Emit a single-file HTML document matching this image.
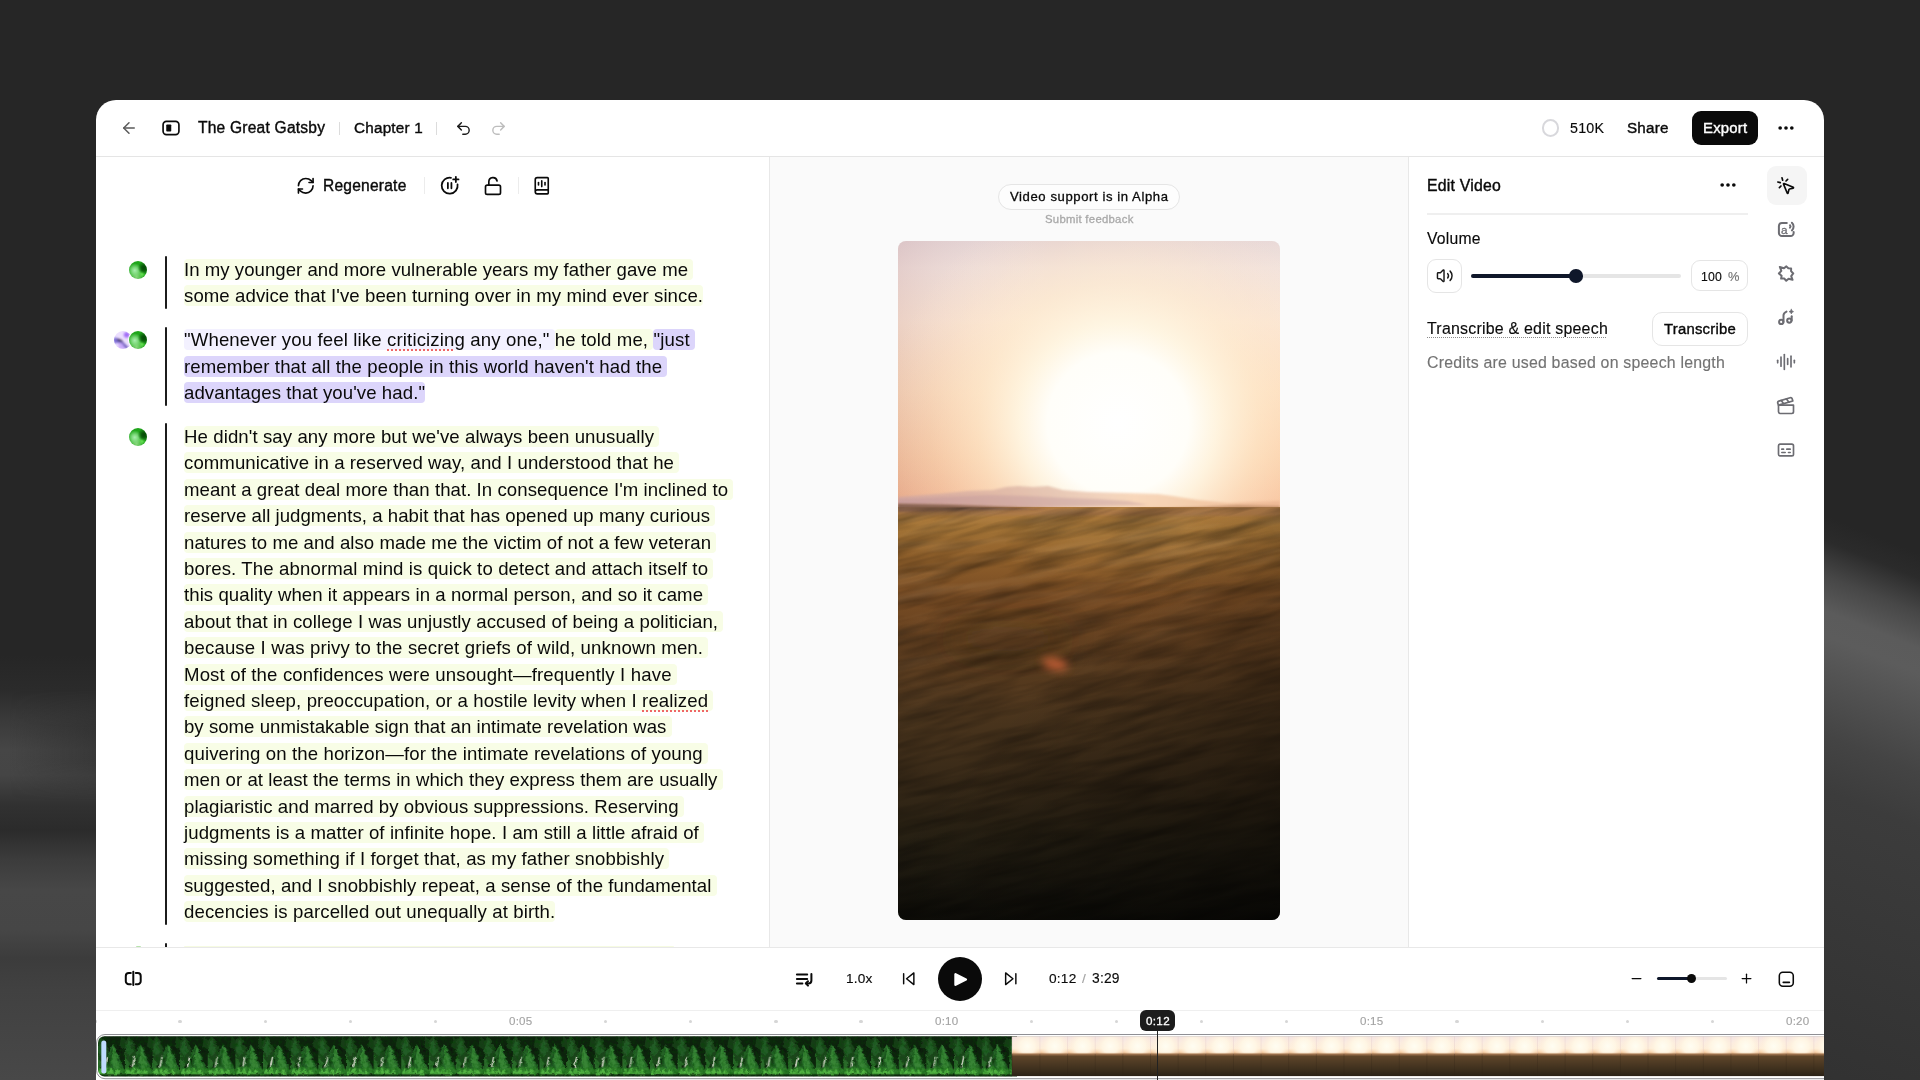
<!DOCTYPE html><html lang="en"><head><meta charset="utf-8"><title>Studio</title><style>

*{box-sizing:border-box;margin:0;padding:0}
html,body{width:1920px;height:1080px;overflow:hidden;background:#262626}
body{font-family:"Liberation Sans",sans-serif;color:#0a0a0a;position:relative;-webkit-font-smoothing:antialiased}
.abs{position:absolute}
.t{position:absolute;white-space:nowrap;line-height:1;will-change:transform}
.m{-webkit-text-stroke:.38px currentColor}
.r{-webkit-text-stroke:.14px currentColor}
svg{position:absolute;overflow:visible}
.ic{fill:none;stroke:#0a0a0a;stroke-width:2;stroke-linecap:round;stroke-linejoin:round}
#bgL{left:0;top:0;width:96px;height:1080px;
 background:linear-gradient(180deg,#262626 0,#262626 655px,#2b2b2b 690px,#3a3a3a 720px,#464646 750px,#454545 775px,#313131 805px,#2b2b2b 830px,#3c3c3c 860px,#474747 890px,#464646 930px,#3c3c3c 958px,#414141 990px,#484848 1080px)}
#bgL i{position:absolute;left:0;top:690px;width:96px;height:110px;background:linear-gradient(90deg,rgba(38,38,38,0) 10%,rgba(38,38,38,.42) 100%);-webkit-mask-image:linear-gradient(180deg,transparent 0,#000 35%,#000 65%,transparent 100%);mask-image:linear-gradient(180deg,transparent 0,#000 35%,#000 65%,transparent 100%)}
.m2{-webkit-text-stroke:.3px currentColor}
#bgR{left:1824px;top:0;width:96px;height:1080px;overflow:hidden;background:#262626}
#bgR i{position:absolute;left:0;top:0;width:96px;height:1200px;transform-origin:0 0;transform:skewY(22deg);
 background:linear-gradient(180deg,#262626 0,#262626 515px,#2b2b2b 540px,#474747 575px,#5b5b5b 610px,#5c5c5c 635px,#525252 675px,#444 735px,#3c3c3c 790px,#383838 900px,#313131 1100px)}
#app{left:96px;top:100px;width:1728px;height:990px;background:#fff;border-radius:20px 20px 0 0;overflow:hidden}
#hdr{left:0;top:0;width:1728px;height:57px;border-bottom:1px solid #e5e5e5;background:#fff}
#left{left:0;top:57px;width:673px;height:790px;background:#fff;overflow:hidden}
#center{left:673px;top:57px;width:640px;height:790px;background:#fafafa;border-left:1px solid #e8e8e8;border-right:1px solid #e8e8e8}
#right{left:1313px;top:57px;width:415px;height:790px;background:#fff}
#bar{left:0;top:847px;width:1728px;height:63px;border-top:1px solid #e8e8e8;background:#fff}
#ruler{left:0;top:910px;width:1728px;height:26px;border-top:1px solid #efefef;background:#fff}
.hl{display:inline-block;border-radius:4px;line-height:20.2px;height:20.8px;padding-top:.6px}
.y{background:#f8fde6}
.p1{background:#f3f1ff}
.p2{background:#dcd5fb}
.ln{will-change:transform;position:absolute;left:88px;white-space:pre;font-size:18.6px;line-height:26.4px;height:26.4px;color:#0a0a0a}
.sp{text-decoration:underline dotted #e66;text-decoration-thickness:1.5px;text-underline-offset:3px}
.bar{position:absolute;left:69px;width:2.5px;background:#1a1a1a;border-radius:1px}
.av{position:absolute;width:18px;height:18px;border-radius:50%}
.avg{background:radial-gradient(circle at 84% 38%,#054a06 0,rgba(5,74,6,.85) 12%,rgba(6,90,8,0) 34%),radial-gradient(circle at 72% 73%,#66e552 0,rgba(98,226,78,0) 19%),radial-gradient(circle at 32% 52%,#aaeeb0 0,rgba(150,232,150,.75) 20%,rgba(110,210,100,0) 46%),radial-gradient(circle at 42% 88%,#86d67a 0,rgba(127,210,116,0) 42%),#1fa51b}
.avp{background:#eadcff}

</style></head><body>
<div id="bgL" class="abs"><i></i></div><div id="bgR" class="abs"><i></i></div>
<div id="app" class="abs"></div>
<div class="abs" style="left:96.00px;top:156.00px;width:1728.00px;height:1.00px;background:#e5e5e5"></div>
<div class="abs" style="left:770.00px;top:157.00px;width:638.00px;height:790.00px;background:#fafafa"></div>
<div class="abs" style="left:769.00px;top:157.00px;width:1.00px;height:790.00px;background:#e8e8e8"></div>
<div class="abs" style="left:1408.00px;top:157.00px;width:1.00px;height:790.00px;background:#e8e8e8"></div>
<div class="abs" style="left:96.00px;top:947.00px;width:1728.00px;height:1.00px;background:#e8e8e8"></div>
<div class="abs" style="left:96.00px;top:1010.00px;width:1728.00px;height:1.00px;background:#efefef"></div>
<svg class="ic" style="left:119.50px;top:119.00px;color:#5a5a5a;stroke:#5a5a5a" width="18.00" height="18.00" viewBox="0 0 24 24" stroke-width="2" ><path d="m12 19-7-7 7-7"/><path d="M19 12H5"/></svg>
<svg class="ic" style="left:160.80px;top:117.70px;color:#0a0a0a;stroke:#0a0a0a" width="20.00" height="20.00" viewBox="0 0 24 24" stroke-width="2" ><rect x="2.500" y="4" width="19" height="16" rx="4"/><rect x="6.300" y="7.700" width="6" height="8.600" rx="1" fill="currentColor" stroke="none"/></svg>
<div class="t m" style="left:198.10px;top:118.22px;font-size:15.57px;line-height:20.24px;font-weight:500;color:#0a0a0a;letter-spacing:0.220px;">The Great Gatsby</div>
<div class="abs" style="left:339.00px;top:121.50px;width:1.00px;height:13.00px;background:#dcdcdc"></div>
<div class="t m" style="left:354.00px;top:118.22px;font-size:15.27px;line-height:19.85px;font-weight:500;color:#0a0a0a;letter-spacing:0.220px;">Chapter 1</div>
<div class="abs" style="left:436.00px;top:121.50px;width:1.00px;height:13.00px;background:#dcdcdc"></div>
<svg class="ic" style="left:454.90px;top:119.90px;color:#1a1a1a;stroke:#1a1a1a" width="17.00" height="17.00" viewBox="0 0 24 24" stroke-width="2" ><path d="M9 14 4 9l5-5"/><path d="M4 9h10.5a5.500 5.500 0 0 1 5.500 5.500a5.500 5.500 0 0 1-5.500 5.500H11"/></svg>
<svg class="ic" style="left:489.90px;top:119.90px;color:#bdbdbd;stroke:#bdbdbd" width="17.00" height="17.00" viewBox="0 0 24 24" stroke-width="2" ><path d="m15 14 5-5-5-5"/><path d="M20 9H9.500A5.500 5.500 0 0 0 4 14.500A5.500 5.500 0 0 0 9.500 20H13"/></svg>
<div class="abs" style="left:1542.20px;top:119.40px;width:17.20px;height:17.20px;border:2px solid #d8d8dc;border-radius:50%"></div>
<div class="t r" style="left:1569.80px;top:119.21px;font-size:14.28px;line-height:18.56px;font-weight:400;color:#0a0a0a;letter-spacing:0.220px;">510K</div>
<div class="t m" style="left:1627.20px;top:118.20px;font-size:15.22px;line-height:19.79px;font-weight:500;color:#0a0a0a;letter-spacing:0.220px;">Share</div>
<div class="abs" style="left:1692.00px;top:110.50px;width:66.00px;height:34.50px;background:#0a0a0a;border-radius:9px"></div>
<div class="t m" style="left:1702.70px;top:118.21px;font-size:14.92px;line-height:19.4px;font-weight:500;color:#fff;letter-spacing:0.220px;">Export</div>
<svg class="ic" style="left:1776.40px;top:117.80px;color:#0a0a0a;stroke:#0a0a0a" width="20.00" height="20.00" viewBox="0 0 24 24" stroke-width="2" ><circle cx="5" cy="12" r="1.200" fill="currentColor"/><circle cx="12" cy="12" r="1.200" fill="currentColor"/><circle cx="19" cy="12" r="1.200" fill="currentColor"/></svg>
<svg class="ic" style="left:295.75px;top:176.05px;color:#0a0a0a;stroke:#0a0a0a" width="19.50" height="19.50" viewBox="0 0 24 24" stroke-width="2" ><path d="M3 12a9 9 0 0 1 9-9 9.750 9.750 0 0 1 6.740 2.740L21 8"/><path d="M21 3v5h-5"/><path d="M21 12a9 9 0 0 1-9 9 9.750 9.750 0 0 1-6.740-2.740L3 16"/><path d="M8 16H3v5"/></svg>
<div class="t m" style="left:322.50px;top:176.41px;font-size:15.57px;line-height:20.24px;font-weight:500;color:#0a0a0a;letter-spacing:0.220px;">Regenerate</div>
<div class="abs" style="left:424.00px;top:177.00px;width:1.00px;height:17.00px;background:#ececec"></div>
<svg class="ic" style="left:438.65px;top:174.95px;color:#0a0a0a;stroke:#0a0a0a" width="21.30" height="21.30" viewBox="0 0 24 24" stroke-width="1.9" ><path d="M13.500 3.100A9 9 0 1 0 20.900 10.500"/><path d="M10 9v6"/><path d="M14 9v6"/><path d="M19 2v6"/><path d="M16 5h6"/></svg>
<svg class="ic" style="left:483.30px;top:175.70px;color:#0a0a0a;stroke:#0a0a0a" width="20.00" height="20.00" viewBox="0 0 24 24" stroke-width="2" ><rect width="18" height="11" x="3" y="11" rx="2" ry="2"/><path d="M7 11V7a5 5 0 0 1 9.900-1"/></svg>
<div class="abs" style="left:517.50px;top:177.00px;width:1.00px;height:17.00px;background:#ececec"></div>
<svg class="ic" style="left:532.15px;top:175.75px;color:#0a0a0a;stroke:#0a0a0a" width="19.50" height="19.50" viewBox="0 0 24 24" stroke-width="2" ><path d="M12 6v7"/><path d="M16 8v3"/><path d="M4 19.500v-15A2.500 2.500 0 0 1 6.500 2H19a1 1 0 0 1 1 1v18a1 1 0 0 1-1 1H6.500a1 1 0 0 1 0-5H20"/><path d="M8 8v3"/></svg>
<div class="ln" style="left:184.4px;top:256.80px;letter-spacing:0.031px"><span class="hl y">In my younger and more vulnerable years my father gave me </span></div>
<div class="ln" style="left:184.4px;top:283.20px;letter-spacing:0.080px"><span class="hl y">some advice that I've been turning over in my mind ever since.</span></div>
<div class="ln" style="left:184.4px;top:327.20px;letter-spacing:0.133px"><span class="hl p1">&quot;Whenever you feel like <span class="sp">criticizing</span> any one,&quot; </span><span class="hl y">he told me, </span><span class="hl p2">&quot;just </span></div>
<div class="ln" style="left:184.4px;top:353.60px;letter-spacing:0.109px"><span class="hl p2">remember that all the people in this world haven't had the </span></div>
<div class="ln" style="left:184.4px;top:380.00px;letter-spacing:0.088px"><span class="hl p2">advantages that you've had."</span></div>
<div class="ln" style="left:184.4px;top:424.00px;letter-spacing:0.095px"><span class="hl y">He didn't say any more but we've always been unusually </span></div>
<div class="ln" style="left:184.4px;top:450.40px;letter-spacing:0.081px"><span class="hl y">communicative in a reserved way, and I understood that he </span></div>
<div class="ln" style="left:184.4px;top:476.80px;letter-spacing:0.062px"><span class="hl y">meant a great deal more than that. In consequence I'm inclined to </span></div>
<div class="ln" style="left:184.4px;top:503.20px;letter-spacing:0.049px"><span class="hl y">reserve all judgments, a habit that has opened up many curious </span></div>
<div class="ln" style="left:184.4px;top:529.60px;letter-spacing:0.049px"><span class="hl y">natures to me and also made me the victim of not a few veteran </span></div>
<div class="ln" style="left:184.4px;top:556.00px;letter-spacing:0.120px"><span class="hl y">bores. The abnormal mind is quick to detect and attach itself to </span></div>
<div class="ln" style="left:184.4px;top:582.40px;letter-spacing:0.069px"><span class="hl y">this quality when it appears in a normal person, and so it came </span></div>
<div class="ln" style="left:184.4px;top:608.80px;letter-spacing:0.104px"><span class="hl y">about that in college I was unjustly accused of being a politician, </span></div>
<div class="ln" style="left:184.4px;top:635.20px;letter-spacing:0.139px"><span class="hl y">because I was privy to the secret griefs of wild, unknown men. </span></div>
<div class="ln" style="left:184.4px;top:661.60px;letter-spacing:0.146px"><span class="hl y">Most of the confidences were unsought—frequently I have </span></div>
<div class="ln" style="left:184.4px;top:688.00px;letter-spacing:0.112px"><span class="hl y">feigned sleep, preoccupation, or a hostile levity when I <span class="sp">realized</span> </span></div>
<div class="ln" style="left:184.4px;top:714.40px;letter-spacing:0.032px"><span class="hl y">by some unmistakable sign that an intimate revelation was </span></div>
<div class="ln" style="left:184.4px;top:740.80px;letter-spacing:0.114px"><span class="hl y">quivering on the horizon—for the intimate revelations of young </span></div>
<div class="ln" style="left:184.4px;top:767.20px;letter-spacing:0.051px"><span class="hl y">men or at least the terms in which they express them are usually </span></div>
<div class="ln" style="left:184.4px;top:793.60px;letter-spacing:0.063px"><span class="hl y">plagiaristic and marred by obvious suppressions. Reserving </span></div>
<div class="ln" style="left:184.4px;top:820.00px;letter-spacing:0.092px"><span class="hl y">judgments is a matter of infinite hope. I am still a little afraid of </span></div>
<div class="ln" style="left:184.4px;top:846.40px;letter-spacing:0.115px"><span class="hl y">missing something if I forget that, as my father snobbishly </span></div>
<div class="ln" style="left:184.4px;top:872.80px;letter-spacing:0.071px"><span class="hl y">suggested, and I snobbishly repeat, a sense of the fundamental </span></div>
<div class="ln" style="left:184.4px;top:899.20px;letter-spacing:0.118px"><span class="hl y">decencies is parcelled out unequally at birth.</span></div>
<div class="abs" style="left:165.40px;top:256.20px;width:2.10px;height:52.80px;background:#1c1c1c;border-radius:1px"></div>
<div class="abs" style="left:165.40px;top:326.60px;width:2.10px;height:79.20px;background:#1c1c1c;border-radius:1px"></div>
<div class="abs" style="left:165.40px;top:423.40px;width:2.10px;height:501.60px;background:#1c1c1c;border-radius:1px"></div>
<div class="abs" style="left:165.40px;top:942.90px;width:2.10px;height:4.20px;background:#1c1c1c;border-radius:1px 1px 0 0"></div>
<div class="abs" style="left:184.40px;top:946.00px;width:490.00px;height:1.00px;background:#f6fbe2;border-radius:4px 4px 0 0"></div>
<div class="av avg" style="left:129.10px;top:260.70px;"></div>
<svg style="left:113.6px;top:331.10px" width="18" height="18" viewBox="0 0 18 18"><defs><clipPath id="pc"><circle cx="9" cy="9" r="9"/></clipPath><filter id="pb" x="-50%" y="-50%" width="200%" height="200%"><feGaussianBlur stdDeviation=".9"/></filter></defs><g clip-path="url(#pc)"><rect width="18" height="18" fill="#ecdfff"/><g filter="url(#pb)"><circle cx="12.700" cy="3.800" r="2.900" fill="#a26df6"/><path d="M-1 6.500 L3 7 L8 10 L15 17 L12 18 L6 12 L1 12 L-1 13Z" fill="#7f6fd8"/><path d="M3 7.500 L7.500 9 L9.500 11.500 L6 10.500 L3.500 10Z" fill="#33243f"/><path d="M8 10.500 L14.500 16.500 L13 17.500 L7.500 11.500Z" fill="#6a55b0"/><path d="M4 12 L8 12.500 L11 18 L5 18Z" fill="#cbaafa"/></g></g></svg>
<div class="av avg" style="left:129.10px;top:331.10px;box-shadow:0 0 0 1px #fff"></div>
<div class="av avg" style="left:129.10px;top:427.90px;"></div>
<div class="abs" style="left:135.50px;top:946.20px;width:5.00px;height:0.80px;background:#b7e3ac;border-radius:5px 5px 0 0"></div>
<div class="abs" style="left:998.00px;top:183.50px;width:182.30px;height:26.00px;background:#fdfdfd;border:1px solid #e5e5e5;border-radius:13px"></div>
<div class="t m2" style="left:1010.00px;top:188.41px;font-size:13.1px;line-height:17.03px;font-weight:500;color:#0a0a0a;letter-spacing:0.586px;">Video support is in Alpha</div>
<div class="t m2" style="left:1044.70px;top:211.71px;font-size:11.34px;line-height:14.74px;font-weight:500;color:#a8a8a8;letter-spacing:0.281px;">Submit feedback</div>
<svg style="left:898px;top:241px" width="382" height="679" viewBox="0 0 382 679">
<defs>
<clipPath id="fc"><rect x="0" y="266.500" width="382" height="413"/></clipPath>
<clipPath id="vc"><rect x="0" y="0" width="382" height="679" rx="8"/></clipPath>
<linearGradient id="sky" x1="0" y1="0" x2="0" y2="1">
<stop offset="0" stop-color="#e4d3d3"/><stop offset=".1" stop-color="#efdfd9"/><stop offset=".3" stop-color="#fae4d0"/><stop offset=".55" stop-color="#fcd7b0"/><stop offset=".8" stop-color="#f9c08e"/><stop offset="1" stop-color="#f3a97a"/>
</linearGradient>
<linearGradient id="skyx" x1="0" y1="0" x2="1" y2="0">
<stop offset="0" stop-color="#c9a4ab" stop-opacity=".3"/><stop offset=".4" stop-color="#fff" stop-opacity="0"/><stop offset="1" stop-color="#fff4ea" stop-opacity=".2"/>
</linearGradient>
<radialGradient id="sun" cx="220" cy="182" r="235" gradientUnits="userSpaceOnUse">
<stop offset="0" stop-color="#fff"/><stop offset=".3" stop-color="#fffef9"/><stop offset=".42" stop-color="#fff7e4" stop-opacity=".92"/><stop offset=".6" stop-color="#ffedd2" stop-opacity=".6"/><stop offset=".8" stop-color="#fee5cb" stop-opacity=".25"/><stop offset="1" stop-color="#fbe0d0" stop-opacity="0"/>
</radialGradient>
<linearGradient id="field" x1="0" y1="0" x2="0" y2="1">
<stop offset="0" stop-color="#b47f40"/><stop offset=".05" stop-color="#a27336"/><stop offset=".12" stop-color="#90602b"/><stop offset=".22" stop-color="#774b23"/><stop offset=".35" stop-color="#603f20"/><stop offset=".5" stop-color="#4b351d"/><stop offset=".65" stop-color="#392a18"/><stop offset=".8" stop-color="#272013"/><stop offset=".92" stop-color="#19160e"/><stop offset="1" stop-color="#0f0e09"/>
</linearGradient>
<linearGradient id="g2m" x1="0" y1="0" x2="0" y2="1"><stop offset="0" stop-color="#fff"/><stop offset=".5" stop-color="#fff"/><stop offset="1" stop-color="#000"/></linearGradient>
<mask id="g2mask" maskUnits="userSpaceOnUse" x="-100" y="150" width="600" height="320"><rect x="-100" y="150" width="600" height="320" fill="url(#g2m)"/></mask>
<linearGradient id="fieldx" x1="0" y1="0" x2="1" y2="1">
<stop offset=".4" stop-color="#000" stop-opacity="0"/><stop offset="1" stop-color="#000" stop-opacity=".5"/>
</linearGradient>
<linearGradient id="mtn" x1="0" y1="0" x2="1" y2="0">
<stop offset="0" stop-color="#c3a1a8"/><stop offset=".4" stop-color="#d8aa99"/><stop offset=".62" stop-color="#f4c096"/><stop offset="1" stop-color="#e6b08e"/>
</linearGradient>
<filter id="bl" x="-100%" y="-100%" width="300%" height="300%"><feGaussianBlur stdDeviation="4.500"/></filter>
<filter id="bl2" x="-100%" y="-200%" width="300%" height="500%"><feGaussianBlur stdDeviation="16"/></filter>
<filter id="bl1" x="-10%" y="-50%" width="120%" height="200%"><feGaussianBlur stdDeviation="1.300"/></filter>
<filter id="grain" x="0" y="0" width="100%" height="100%">
<feTurbulence type="fractalNoise" baseFrequency="0.012 0.09" numOctaves="3" seed="7" result="n"/>
<feColorMatrix type="matrix" values="0 0 0 0 0  0 0 0 0 0  0 0 0 0 0  1.600 0 0 0 -0.55"/>
</filter>
<filter id="grain2" x="0" y="0" width="100%" height="100%">
<feTurbulence type="fractalNoise" baseFrequency="0.012 0.09" numOctaves="3" seed="23" result="n"/>
<feColorMatrix type="matrix" values="0 0 0 0 1  0 0 0 0 .82  0 0 0 0 .55  1.500 0 0 0 -0.62"/>
</filter>
</defs>
<g clip-path="url(#vc)">
<rect width="382" height="270" fill="url(#sky)"/>
<rect width="382" height="270" fill="url(#skyx)"/>
<rect width="382" height="300" fill="url(#sun)"/>
<path filter="url(#bl1)" d="M0 256 L40 253 L70 250 L95 249 L108 246 L120 245 L135 246 L150 245 L165 249 L190 251 L230 252 L260 253 L275 255 L300 259 L330 262 L350 261 L382 260 V272 H0Z" fill="url(#mtn)" opacity=".6"/>
<path filter="url(#bl1)" d="M0 259 L50 256 L90 254 L130 255 L170 257 L200 258 L230 260 L250 264 L0 268Z" fill="#b9929c" opacity=".35"/>
<rect y="266" width="382" height="413" fill="url(#field)"/>
<path filter="url(#bl1)" d="M0 263 L60 264 L120 266 L180 268 L240 268 L300 266 L340 264 L382 265 V275 L0 274Z" fill="#a87650" opacity=".55"/>
<path filter="url(#bl1)" d="M0 263 L50 264 L110 266.500 L150 268 L0 271Z" fill="#7a584a" opacity=".8"/>
<ellipse cx="110" cy="398" rx="60" ry="14" fill="#2e2010" opacity=".4" filter="url(#bl2)"/>
<ellipse cx="250" cy="310" rx="120" ry="10" fill="#d0a058" opacity=".35" filter="url(#bl2)"/>
<g clip-path="url(#fc)"><g transform="rotate(-14 191 470)" opacity=".42"><rect x="-80" y="180" width="560" height="600" filter="url(#grain)"/></g>
<g transform="rotate(-10 191 470)" opacity=".13" mask="url(#g2mask)"><rect x="-80" y="180" width="560" height="290" filter="url(#grain2)"/></g></g>
<rect y="266" width="382" height="413" fill="url(#fieldx)"/>
<rect y="258" width="382" height="14" fill="url(#field)" opacity="0"/>
<ellipse cx="157" cy="423" rx="13" ry="6" fill="#d8683a" opacity=".82" filter="url(#bl)" transform="rotate(12 157 423)"/>
</g>
</svg>

<div class="t m" style="left:1427.40px;top:176.41px;font-size:15.82px;line-height:20.57px;font-weight:500;color:#0a0a0a;letter-spacing:0.220px;">Edit Video</div>
<svg class="ic" style="left:1718.30px;top:175.40px;color:#0a0a0a;stroke:#0a0a0a" width="20.00" height="20.00" viewBox="0 0 24 24" stroke-width="2" ><circle cx="5" cy="12" r="1.200" fill="currentColor"/><circle cx="12" cy="12" r="1.200" fill="currentColor"/><circle cx="19" cy="12" r="1.200" fill="currentColor"/></svg>
<div class="abs" style="left:1427.00px;top:213.30px;width:321.00px;height:1.50px;background:#efefef"></div>
<div class="t r" style="left:1427.40px;top:229.01px;font-size:15.72px;line-height:20.44px;font-weight:400;color:#0a0a0a;letter-spacing:0.220px;">Volume</div>
<div class="abs" style="left:1427.00px;top:259.00px;width:35.00px;height:34.00px;border:1px solid #e5e5e5;border-radius:9px;background:#fff"></div>
<svg class="ic" style="left:1435.85px;top:267.05px;color:#1a1a1a;stroke:#1a1a1a" width="17.50" height="17.50" viewBox="0 0 24 24" stroke-width="2" ><path d="M11 4.702a.705.705 0 0 0-1.203-.498L6.413 7.587A1.400 1.400 0 0 1 5.416 8H3a1 1 0 0 0-1 1v6a1 1 0 0 0 1 1h2.416a1.400 1.400 0 0 1 .997.413l3.383 3.384A.705.705 0 0 0 11 19.298z"/><path d="M16 9a5 5 0 0 1 0 6"/><path d="M19.364 18.364a9 9 0 0 0 0-12.728"/></svg>
<div class="abs" style="left:1471.30px;top:274.00px;width:210.00px;height:4.00px;background:#e5e5e5;border-radius:2px"></div>
<div class="abs" style="left:1471.30px;top:274.00px;width:105.00px;height:4.00px;background:#0f172a;border-radius:2px"></div>
<div class="abs" style="left:1569.30px;top:269.20px;width:13.60px;height:13.60px;background:#0f172a;border-radius:50%"></div>
<div class="abs" style="left:1691.00px;top:260.00px;width:57.00px;height:31.00px;border:1px solid #e5e5e5;border-radius:9px;background:#fff"></div>
<div class="t r" style="left:1700.50px;top:269.71px;font-size:12.27px;line-height:15.95px;font-weight:400;color:#0a0a0a;letter-spacing:0.220px;">100</div>
<div class="t r" style="left:1727.50px;top:268.70px;font-size:12.9px;line-height:16.77px;font-weight:400;color:#737373;letter-spacing:0.000px;">%</div>
<div class="t r" style="left:1427.00px;top:319.21px;font-size:15.94px;line-height:20.72px;font-weight:400;color:#0a0a0a;letter-spacing:0.220px;text-decoration:underline dotted #8a8a8a;text-decoration-thickness:1.3px;text-underline-offset:2.6px;">Transcribe &amp; edit speech</div>
<div class="abs" style="left:1651.50px;top:311.50px;width:96.00px;height:34.50px;border:1px solid #e5e5e5;border-radius:10px;background:#fff"></div>
<div class="t m" style="left:1663.80px;top:320.22px;font-size:14.88px;line-height:19.34px;font-weight:500;color:#0a0a0a;letter-spacing:0.220px;">Transcribe</div>
<div class="t r" style="left:1427.00px;top:352.51px;font-size:15.89px;line-height:20.66px;font-weight:400;color:#737373;letter-spacing:0.220px;">Credits are used based on speech length</div>
<div class="abs" style="left:1766.50px;top:166.20px;width:40.00px;height:39.30px;background:#f5f5f5;border-radius:9px"></div>
<svg class="ic" style="left:1776.30px;top:175.90px;color:#0a0a0a;stroke:#0a0a0a" width="20.00" height="20.00" viewBox="0 0 24 24" stroke-width="2" ><path d="M14 4.100 12 6"/><path d="m5.100 8-2.900-.800"/><path d="m6 12-1.900 2"/><path d="M7.200 2.200 8 5.100"/><path d="M9.037 9.690a.498.498 0 0 1 .653-.653l11 4.500a.500.500 0 0 1-.074.949l-4.349 1.041a1 1 0 0 0-.740.739l-1.040 4.350a.500.500 0 0 1-.950.074z"/></svg>
<svg class="ic" style="left:1772px;top:216px;color:#6c6c72;stroke:#6c6c72" width="30" height="28" viewBox="1772 216 30 28" stroke-width="1.55"><path d="M1786.800 223.100H1781.900a3 3 0 0 0-3 3v6.900a3 3 0 0 0 3 3h8.750a3 3 0 0 0 3-3v-.900"/><path d="M1791.900 222.700a5.200 5.200 0 0 1 0 7.700"/><path d="M1790 225.200a1.900 1.900 0 0 1 0 2.500"/></svg>
<div class="t m2" style="left:1780.70px;top:223.12px;font-size:11.8px;line-height:15.34px;font-weight:500;color:#6c6c72;letter-spacing:0.000px;">a</div>
<svg class="ic" style="left:1772px;top:260px;color:#6c6c72;stroke:#6c6c72" width="30" height="28" viewBox="1772 260 30 28" stroke-width="1.5"><path d="M1786.36 266.36 L1788.33 268.30 L1791.14 268.59 L1791.06 271.15 L1793.25 273.48 L1791.19 276.07 L1792.54 279.78 L1788.59 278.67 L1786.24 280.72 L1784.19 278.54 L1781.11 278.62 L1781.59 275.82 L1778.89 273.48 L1781.33 270.89 L1779.83 266.95 L1783.93 268.30Z"/></svg>
<svg class="ic" style="left:1772px;top:304px;color:#6c6c72;stroke:#6c6c72" width="30" height="28" viewBox="1772 304 30 28" stroke-width="1.5"><circle cx="1781.200" cy="321.900" r="2.150"/><path d="M1783.500 321.900V315.300q0-2.300 3-3.700"/><circle cx="1789.300" cy="320.600" r="2.150"/><path d="M1791.700 320.600V316.300"/><path d="M1791.300 309.300q.300 2 2.300 2.350q-2 .350-2.300 2.350q-.300-2-2.300-2.350q2-.350 2.300-2.350z" fill="currentColor" stroke-width=".6"/></svg>
<svg class="ic" style="left:1776.30px;top:351.50px;color:#6c6c72;stroke:#6c6c72" width="20.00" height="20.00" viewBox="0 0 24 24" stroke-width="1.85" ><path d="M2 10v3"/><path d="M6 6v11"/><path d="M10 3v18"/><path d="M14 8v7"/><path d="M18 5v13"/><path d="M22 10v3"/></svg>
<svg class="ic" style="left:1776.30px;top:395.80px;color:#6c6c72;stroke:#6c6c72" width="20.00" height="20.00" viewBox="0 0 24 24" stroke-width="1.85" ><path d="M20.200 6 3 11l-.900-2.400c-.300-1.100.300-2.200 1.300-2.500l13.500-4c1.100-.300 2.200.300 2.500 1.300Z"/><path d="m6.200 5.300 3.100 3.900"/><path d="m12.400 3.400 3.100 4"/><path d="M3 11h18v8a2 2 0 0 1-2 2H5a2 2 0 0 1-2-2Z"/></svg>
<svg class="ic" style="left:1776.30px;top:439.50px;color:#6c6c72;stroke:#6c6c72" width="20.00" height="20.00" viewBox="0 0 24 24" stroke-width="1.85" ><rect width="18" height="14" x="3" y="5" rx="2" ry="2"/><path d="M7 15h4M15 15h2M7 11h2M13 11h4"/></svg>
<svg class="ic" style="left:120px;top:966px;color:#0a0a0a;stroke:#0a0a0a" width="28" height="26" viewBox="120 966 28 26" stroke-width="1.8"><path d="M130.800 972.950H128.800a3 3 0 0 0-3 3v5.250a3 3 0 0 0 3 3H130.800"/><path d="M135.800 972.950H137.700a3 3 0 0 1 3 3v5.250a3 3 0 0 1-3 3H135.800"/><path d="M133.300 971.800V985.100"/></svg>
<svg class="ic" style="left:790px;top:966px;color:#0a0a0a;stroke:#0a0a0a" width="30" height="26" viewBox="790 966 30 26" stroke-width="1.7"><path d="M796.900 974.400H807.200M796.900 978.900H807.200M796.900 983.400H802.400"/><path d="M811.400 974V980.400a3 3 0 0 1-3 3H806.200"/><path d="M808 981.200L805.800 983.400L808 985.600"/></svg>
<div class="t r" style="left:845.80px;top:970.41px;font-size:13.63px;line-height:17.72px;font-weight:400;color:#0a0a0a;letter-spacing:0.220px;">1.0x</div>
<svg class="ic" style="left:900.45px;top:969.85px;color:#0a0a0a;stroke:#0a0a0a" width="17.50" height="17.50" viewBox="0 0 24 24" stroke-width="2.2" ><polygon points="19 20 9 12 19 4 19 20"/><line x1="5" x2="5" y1="19" y2="5"/></svg>
<div class="abs" style="left:938.20px;top:957.00px;width:44.00px;height:44.00px;background:#0a0a0a;border-radius:50%"></div>
<svg style="left:953.3px;top:970.5px" width="16" height="17" viewBox="0 0 16 17"><path d="M2.500 3.300v10.400l10.400-5.200z" fill="#fff" stroke="#fff" stroke-width="2.400" stroke-linejoin="round"/></svg>
<svg class="ic" style="left:1001.85px;top:969.85px;color:#0a0a0a;stroke:#0a0a0a" width="17.50" height="17.50" viewBox="0 0 24 24" stroke-width="2.2" ><polygon points="5 4 15 12 5 20 5 4"/><line x1="19" x2="19" y1="5" y2="19"/></svg>
<div class="t r" style="left:1048.80px;top:970.40px;font-size:13.7px;line-height:17.81px;font-weight:400;color:#0a0a0a;letter-spacing:0.220px;">0:12</div>
<div class="t r" style="left:1082.30px;top:970.40px;font-size:13.7px;line-height:17.81px;font-weight:400;color:#a3a3a3;letter-spacing:0.000px;">/</div>
<div class="t r" style="left:1091.90px;top:970.41px;font-size:13.8px;line-height:17.94px;font-weight:400;color:#0a0a0a;letter-spacing:0.220px;">3:29</div>
<svg class="ic" style="left:1629.30px;top:971.20px;color:#0a0a0a;stroke:#0a0a0a" width="15.00" height="15.00" viewBox="0 0 24 24" stroke-width="2" ><path d="M5 12h14"/></svg>
<div class="abs" style="left:1657.00px;top:977.10px;width:70.00px;height:3.00px;background:#e5e5e5;border-radius:2px"></div>
<div class="abs" style="left:1657.00px;top:977.10px;width:34.00px;height:3.00px;background:#0f172a;border-radius:2px"></div>
<div class="abs" style="left:1686.90px;top:974.10px;width:9.00px;height:9.00px;background:#0a0a0a;border-radius:50%"></div>
<svg class="ic" style="left:1739.20px;top:971.20px;color:#0a0a0a;stroke:#0a0a0a" width="15.00" height="15.00" viewBox="0 0 24 24" stroke-width="2" ><path d="M5 12h14"/><path d="M12 5v14"/></svg>
<svg class="ic" style="left:1776.70px;top:969.60px;color:#0a0a0a;stroke:#0a0a0a" width="18.60" height="18.60" viewBox="0 0 24 24" stroke-width="2" ><rect x="3" y="3" width="18" height="18" rx="4.500"/><path d="M8 16h8"/></svg>
<div class="abs" style="left:178.43px;top:1020.00px;width:3.20px;height:3.20px;background:#d6d6d6;border-radius:50%"></div>
<div class="abs" style="left:263.56px;top:1020.00px;width:3.20px;height:3.20px;background:#d6d6d6;border-radius:50%"></div>
<div class="abs" style="left:348.69px;top:1020.00px;width:3.20px;height:3.20px;background:#d6d6d6;border-radius:50%"></div>
<div class="abs" style="left:433.82px;top:1020.00px;width:3.20px;height:3.20px;background:#d6d6d6;border-radius:50%"></div>
<div class="t r" style="left:508.95px;top:1014.21px;font-size:11.58px;line-height:15.05px;font-weight:400;color:#a3a3a3;letter-spacing:0.220px;">0:05</div>
<div class="abs" style="left:604.08px;top:1020.00px;width:3.20px;height:3.20px;background:#d6d6d6;border-radius:50%"></div>
<div class="abs" style="left:689.21px;top:1020.00px;width:3.20px;height:3.20px;background:#d6d6d6;border-radius:50%"></div>
<div class="abs" style="left:774.34px;top:1020.00px;width:3.20px;height:3.20px;background:#d6d6d6;border-radius:50%"></div>
<div class="abs" style="left:859.47px;top:1020.00px;width:3.20px;height:3.20px;background:#d6d6d6;border-radius:50%"></div>
<div class="t r" style="left:934.60px;top:1014.21px;font-size:11.58px;line-height:15.05px;font-weight:400;color:#a3a3a3;letter-spacing:0.220px;">0:10</div>
<div class="abs" style="left:1029.73px;top:1020.00px;width:3.20px;height:3.20px;background:#d6d6d6;border-radius:50%"></div>
<div class="abs" style="left:1114.86px;top:1020.00px;width:3.20px;height:3.20px;background:#d6d6d6;border-radius:50%"></div>
<div class="abs" style="left:1199.99px;top:1020.00px;width:3.20px;height:3.20px;background:#d6d6d6;border-radius:50%"></div>
<div class="abs" style="left:1285.12px;top:1020.00px;width:3.20px;height:3.20px;background:#d6d6d6;border-radius:50%"></div>
<div class="t r" style="left:1360.25px;top:1014.21px;font-size:11.58px;line-height:15.05px;font-weight:400;color:#a3a3a3;letter-spacing:0.220px;">0:15</div>
<div class="abs" style="left:1455.38px;top:1020.00px;width:3.20px;height:3.20px;background:#d6d6d6;border-radius:50%"></div>
<div class="abs" style="left:1540.51px;top:1020.00px;width:3.20px;height:3.20px;background:#d6d6d6;border-radius:50%"></div>
<div class="abs" style="left:1625.64px;top:1020.00px;width:3.20px;height:3.20px;background:#d6d6d6;border-radius:50%"></div>
<div class="abs" style="left:1710.77px;top:1020.00px;width:3.20px;height:3.20px;background:#d6d6d6;border-radius:50%"></div>
<div class="t r" style="left:1785.90px;top:1014.21px;font-size:11.58px;line-height:15.05px;font-weight:400;color:#a3a3a3;letter-spacing:0.220px;">0:20</div>
<div class="abs" style="left:96.00px;top:1020.00px;width:1.20px;height:3.20px;background:#d6d6d6;border-radius:0 2px 2px 0"></div>
<svg style="left:96px;top:1034px;overflow:hidden" width="1728" height="46" viewBox="0 0 1728 46">
<defs>
<clipPath id="tc"><rect x="2" y="2.200" width="1760" height="40.200" rx="6.500"/></clipPath>
<filter id="fb" x="0" y="0" width="100%" height="100%"><feGaussianBlur stdDeviation=".55"/></filter>
<linearGradient id="fg" x1="0" y1="0" x2="0" y2="1"><stop offset="0" stop-color="#081708"/><stop offset=".2" stop-color="#14330f"/><stop offset=".6" stop-color="#1d4a1a"/><stop offset="1" stop-color="#225a1d"/></linearGradient>
<pattern id="forest" x="1.200" y="2.200" width="27.640" height="40.200" patternUnits="userSpaceOnUse">
<rect width="27.640" height="41" fill="#0c200c"/>
<path d="M4 0 L9 6 L7.500 6.500 L12 13 L10 13.500 L14 21 L12 28 L-3 30 L-3 8Z" fill="#1a451a"/>
<path d="M4 3 L7 8 L5 9 L9 15 L4 20 L0 14Z" fill="#27602a" opacity=".8"/>
<path d="M-3 16 L2 20 L0 21 L5 27 L3 34 L-3 36Z" fill="#2b6b2a"/>
<path d="M24 0 L27.640 4 V14 L22 10Z" fill="#163d16"/>
<path d="M15.500 8 L20 14.500 L18.500 15 L23 22 L21.500 22.500 L26 30 L27.640 41 H4 L6.500 32 L9.500 25.500 L8 25 L12 18 L10.500 17.500Z" fill="#256427"/>
<path d="M15.500 9 L19 15 L17.500 15.500 L21.500 22 L19.500 23 L23.500 30 L17 33 L14 24 L15 16Z" fill="#3a8a38" opacity=".85"/>
<path d="M16 11 L13 16 L15 16.500 L11.500 22 L13.500 23 L10 29 L13 31 L14.500 22Z" fill="#1a4d1c" opacity=".8"/>
<path d="M20 9 Q23 11 25 16 L22 15Z" fill="#081808"/>
<path d="M8.700 20.500 L10.200 20.500 L8.600 30 L6.400 31.500Z" fill="#d9dcce" opacity=".9"/>
<path d="M10.200 23 L12.500 21.500 L11.800 29Z" fill="#0a1e0a" opacity=".8"/>
<path d="M0 33 Q4 30 8 32.500 Q12 29.500 16 32.500 Q21 29.500 27.640 33 V41 H0Z" fill="#2f8129" opacity=".85"/>
<path d="M1 36 l2.500 -4 l2 4 l3.500 -5 l2 6 l3 -5 l3 5 l3 -4.500 l3 4.500 V41 H1Z" fill="#55b946" opacity=".9"/>
<rect y="38" width="27.640" height="3" fill="#071707" opacity=".8"/>
</pattern>
<filter id="fdisp" x="0" y="0" width="100%" height="100%">
<feTurbulence type="fractalNoise" baseFrequency=".22 .25" numOctaves="2" seed="11" result="t"/>
<feDisplacementMap in="SourceGraphic" in2="t" scale="3.200" xChannelSelector="R" yChannelSelector="G"/>
<feGaussianBlur stdDeviation=".45"/>
</filter>
<filter id="fnoise" x="0" y="0" width="100%" height="100%">
<feTurbulence type="fractalNoise" baseFrequency=".35 .3" numOctaves="2" seed="3"/>
<feColorMatrix type="matrix" values="0 0 0 0 0  0 0 0 0 .08  0 0 0 0 0  1.800 0 0 0 -.75"/>
</filter>
<linearGradient id="ss" x1="0" y1="0" x2="0" y2="1">
<stop offset="0" stop-color="#f3e3e1"/><stop offset=".15" stop-color="#faece4"/><stop offset=".3" stop-color="#fef0dc"/><stop offset=".4" stop-color="#f8cfa4"/><stop offset=".44" stop-color="#a97b55"/><stop offset=".5" stop-color="#60462a"/><stop offset=".62" stop-color="#523d25"/><stop offset=".8" stop-color="#40311e"/><stop offset="1" stop-color="#2a2116"/>
</linearGradient>
<radialGradient id="sg" cx="15.500" cy="10" r="15.500" gradientUnits="userSpaceOnUse">
<stop offset="0" stop-color="#fffdf2"/><stop offset=".5" stop-color="#fff6e4" stop-opacity=".97"/><stop offset="1" stop-color="#ffe9d0" stop-opacity="0"/>
</radialGradient>
<pattern id="sunset" x="915.800" y="2.200" width="27.640" height="40.200" patternUnits="userSpaceOnUse">
<rect width="27.640" height="40.200" fill="url(#ss)"/>
<rect width="27.640" height="17" fill="url(#sg)"/>
<rect x="0" width=".7" height="17" fill="#e6cbc6" opacity=".6"/>
<rect x="0" y="17.500" width=".7" height="23" fill="#2a1e12" opacity=".35"/>
</pattern>
</defs>
<rect x=".5" y=".5" width="1760" height="44.200" rx="8.500" fill="#fff" stroke="#8f8f94" stroke-width="1"/>
<g clip-path="url(#tc)">
<g filter="url(#fdisp)"><rect x="-4" y="-4" width="925" height="54" fill="url(#forest)"/></g>
<rect x="0" y="0" width="915.800" height="46" filter="url(#fnoise)" opacity=".5"/>
<rect x="915.800" y="2.200" width="830" height="40.200" fill="url(#sunset)"/>
</g>
<rect x="5.300" y="6.500" width="5" height="33" rx="2.500" fill="#bfdbfe"/>
</svg>

<div class="abs" style="left:1140.20px;top:1010.00px;width:34.40px;height:21.40px;background:#1c1c1c;border-radius:6px"></div>
<div class="t m2" style="left:1145.50px;top:1013.11px;font-size:11.65px;line-height:15.15px;font-weight:500;color:#fff;letter-spacing:0.316px;">0:12</div>
<div class="abs" style="left:1156.90px;top:1031.00px;width:1.60px;height:50.00px;background:#222"></div>
</body></html>
